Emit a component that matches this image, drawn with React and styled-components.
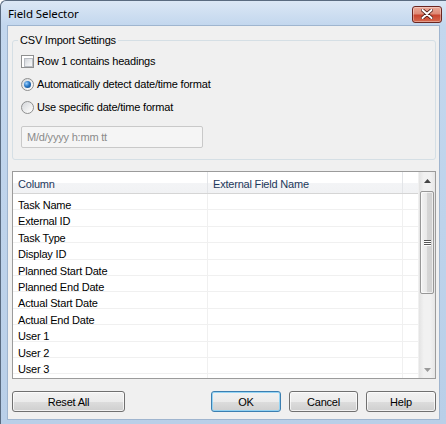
import React from 'react'
import styled, { createGlobalStyle } from 'styled-components'

const GlobalStyle = createGlobalStyle`
	body {
		margin: 0;
		background: #fff;
		font-family: "Liberation Sans", Arial, sans-serif;
	}
	* { box-sizing: border-box; }
`

const Window = styled.div`
	width: 446px;
	height: 424px;
	display: flex;
	flex-direction: column;
	background: linear-gradient(180deg, #dbe7f5 0px, #c3d7ee 24px, #b9cfe8 100%);
	border-top: 1px solid #5a6b80;
	border-left: 1px solid #5a6b80;
	border-radius: 6px 0 0 0;
	font-size: 11px;
	letter-spacing: -0.2px;
	color: #000;
`

const TitleBar = styled.div`
	height: 24px;
	display: flex;
	align-items: center;
	justify-content: space-between;
	padding: 0 4px 0 7px;
`

const Title = styled.div`
	font-family: "Noto Sans", sans-serif;
	font-size: 11.5px;
	letter-spacing: -0.1px;
	color: #000;
	margin-top: 1px;
`

const CloseButton = styled.div`
	width: 30px;
	height: 17px;
	margin-top: 2px;
	border: 1px solid #6b2620;
	border-radius: 3px;
	background: linear-gradient(180deg, #eba897 0%, #de8a76 45%, #c9452f 55%, #d66a4f 100%);
	box-shadow: inset 0 0 0 1px rgba(255, 255, 255, 0.35);
	display: flex;
	align-items: center;
	justify-content: center;
`

const Client = styled.div`
	flex: 1;
	margin: 0 6px 4px 6px;
	background: #f0f0f0;
	border: 1px solid #9fb5cf;
	padding: 7px 3px 6px 4px;
	display: flex;
	flex-direction: column;
`

const GroupBox = styled.fieldset`
	margin: 0;
	border: 1px solid #d5dfe5;
	border-radius: 3px;
	padding: 2px 8px 11px 8px;
	display: flex;
	flex-direction: column;
`

const GroupLabel = styled.legend`
	padding: 0 2px;
	margin-left: -3px;
	line-height: 15px;
`

const OptionRow = styled.label`
	height: 22px;
	display: flex;
	align-items: center;
	gap: 3px;
	&:nth-of-type(2),
	&:nth-of-type(3) {
		margin-top: 1px;
	}
`

const CheckBox = styled.span`
	width: 13px;
	height: 13px;
	border: 1px solid #8e8f8f;
	background: #fff;
	padding: 2px;
	display: inline-block;
	&::after {
		content: '';
		display: block;
		width: 7px;
		height: 7px;
		border: 1px solid #b8bcc2;
		background: linear-gradient(135deg, #d0d4d9 0%, #eceef0 60%, #f8f8f8 100%);
	}
`

const Radio = styled.span`
	width: 13px;
	height: 13px;
	border-radius: 50%;
	border: 1px solid #8e8f8f;
	background: linear-gradient(135deg, #d3d6da 0%, #f4f4f4 70%, #ffffff 100%);
	display: inline-flex;
	align-items: center;
	justify-content: center;
	&::after {
		content: '';
		display: ${p => (p.$checked ? 'block' : 'none')};
		width: 7px;
		height: 7px;
		border-radius: 50%;
		background: radial-gradient(circle at 35% 35%, #9cd1ff 0%, #2b79c6 45%, #0b3f78 100%);
	}
`

const TextBox = styled.div`
	margin-top: 8px;
	width: 182px;
	height: 22px;
	border: 1px solid #c9c9c9;
	border-radius: 2px;
	background: #f5f5f5;
	color: #8b8b8b;
	padding-left: 5px;
	display: flex;
	align-items: center;
`

const List = styled.div`
	margin-top: 11px;
	height: 208px;
	border: 1px solid #9b9b9b;
	background: #fff;
	display: flex;
	overflow: hidden;
`

const Table = styled.div`
	flex: 1;
	overflow: hidden;
`

const Row = styled.div`
	display: grid;
	grid-template-columns: 195px 195px 1fr;
	height: ${p => (p.$header ? '22px' : '16.4px')};
	border-bottom: 1px solid ${p => (p.$header ? '#d5d5d5' : '#f0f0f0')};
	background: ${p => (p.$header ? 'linear-gradient(180deg, #ffffff 0%, #ffffff 50%, #f3f4f6 51%, #f1f2f4 100%)' : '#fff')};
`

const Cell = styled.div`
	border-right: 1px solid ${p => (p.$header ? '#e3e5e8' : '#f0f0f0')};
	padding-left: 5px;
	padding-top: ${p => (p.$header ? '6px' : '5px')};
	white-space: nowrap;
	line-height: 13px;
	color: ${p => (p.$header ? '#1e395b' : '#000')};
	&:last-child {
		border-right: none;
	}
`

const ScrollBar = styled.div`
	width: 17px;
	display: flex;
	flex-direction: column;
	background: linear-gradient(90deg, #e3e3e3 0%, #f1f1f1 30%, #f1f1f1 70%, #e6e6e6 100%);
	border-left: 1px solid #f0f0f0;
`

const ArrowButton = styled.div`
	height: 17px;
	display: flex;
	align-items: center;
	justify-content: center;
`

const Track = styled.div`
	flex: 1;
	padding: 2px 1px 0 1px;
`

const Thumb = styled.div`
	height: 103px;
	border: 1px solid #979797;
	border-radius: 2px;
	background: linear-gradient(90deg, #f3f3f3 0%, #e8e8e8 50%, #d6d6d6 51%, #cfcfcf 100%);
	box-shadow: inset 0 0 0 1px rgba(255, 255, 255, 0.6);
	display: flex;
	flex-direction: column;
	align-items: center;
	justify-content: center;
	gap: 1px;
`

const Grip = styled.span`
	width: 7px;
	height: 1px;
	background: #555;
	box-shadow: 0 1px 0 #fff;
`

const ButtonBar = styled.div`
	margin-top: 12px;
	display: flex;
	align-items: center;
`

const Spacer = styled.div`
	flex: 1;
`

const Button = styled.button`
	width: ${p => p.$width || 70}px;
	height: 21px;
	margin-left: ${p => p.$gap || 0}px;
	border: 1px solid ${p => (p.$default ? '#3c7fb1' : '#707070')};
	border-radius: 3px;
	background: linear-gradient(180deg, #f2f2f2 0%, #ebebeb 50%, #dddddd 51%, #cfcfcf 100%);
	box-shadow: inset 0 0 0 1px ${p => (p.$default ? 'rgba(140, 210, 245, 0.9)' : 'rgba(255, 255, 255, 0.7)')};
	font-family: inherit;
	font-size: 11px;
	letter-spacing: -0.2px;
	color: #000;
	padding: 0;
`

const fields = [
	'Task Name',
	'External ID',
	'Task Type',
	'Display ID',
	'Planned Start Date',
	'Planned End Date',
	'Actual Start Date',
	'Actual End Date',
	'User 1',
	'User 2',
	'User 3',
	'',
]

const App = () => {
	document.title = 'Field Selector'

	return (
		<Window>
			<GlobalStyle />
			<TitleBar>
				<Title>Field Selector</Title>
				<CloseButton>
					<svg width="12" height="10" viewBox="0 0 12 10">
						<path d="M1.5 1 L10.5 9 M10.5 1 L1.5 9" stroke="#4a1a14" strokeWidth="3.6" strokeLinecap="round" />
						<path d="M1.5 1 L10.5 9 M10.5 1 L1.5 9" stroke="#ffffff" strokeWidth="2" strokeLinecap="round" />
					</svg>
				</CloseButton>
			</TitleBar>
			<Client>
				<GroupBox>
					<GroupLabel>CSV Import Settings</GroupLabel>
					<OptionRow>
						<CheckBox />
						Row 1 contains headings
					</OptionRow>
					<OptionRow>
						<Radio $checked />
						Automatically detect date/time format
					</OptionRow>
					<OptionRow>
						<Radio />
						Use specific date/time format
					</OptionRow>
					<TextBox>M/d/yyyy h:mm tt</TextBox>
				</GroupBox>

				<List>
					<Table>
						<Row $header>
							<Cell $header>Column</Cell>
							<Cell $header>External Field Name</Cell>
							<Cell $header />
						</Row>
						{fields.map((name, i) => (
							<Row key={i}>
								<Cell>{name}</Cell>
								<Cell />
								<Cell />
							</Row>
						))}
					</Table>
					<ScrollBar>
						<ArrowButton>
							<svg width="7" height="4" viewBox="0 0 7 4">
								<path d="M3.5 0 L7 4 L0 4 Z" fill="#444" />
							</svg>
						</ArrowButton>
						<Track>
							<Thumb>
								<Grip />
								<Grip />
								<Grip />
							</Thumb>
						</Track>
						<ArrowButton>
							<svg width="7" height="4" viewBox="0 0 7 4">
								<path d="M0 0 L7 0 L3.5 4 Z" fill="#9a9a9a" />
							</svg>
						</ArrowButton>
					</ScrollBar>
				</List>

				<ButtonBar>
					<Button $width={113}>Reset All</Button>
					<Spacer />
					<Button $default $width={70}>OK</Button>
					<Button $width={69} $gap={8}>Cancel</Button>
					<Button $width={70} $gap={8}>Help</Button>
				</ButtonBar>
			</Client>
		</Window>
	)
}

export default App
